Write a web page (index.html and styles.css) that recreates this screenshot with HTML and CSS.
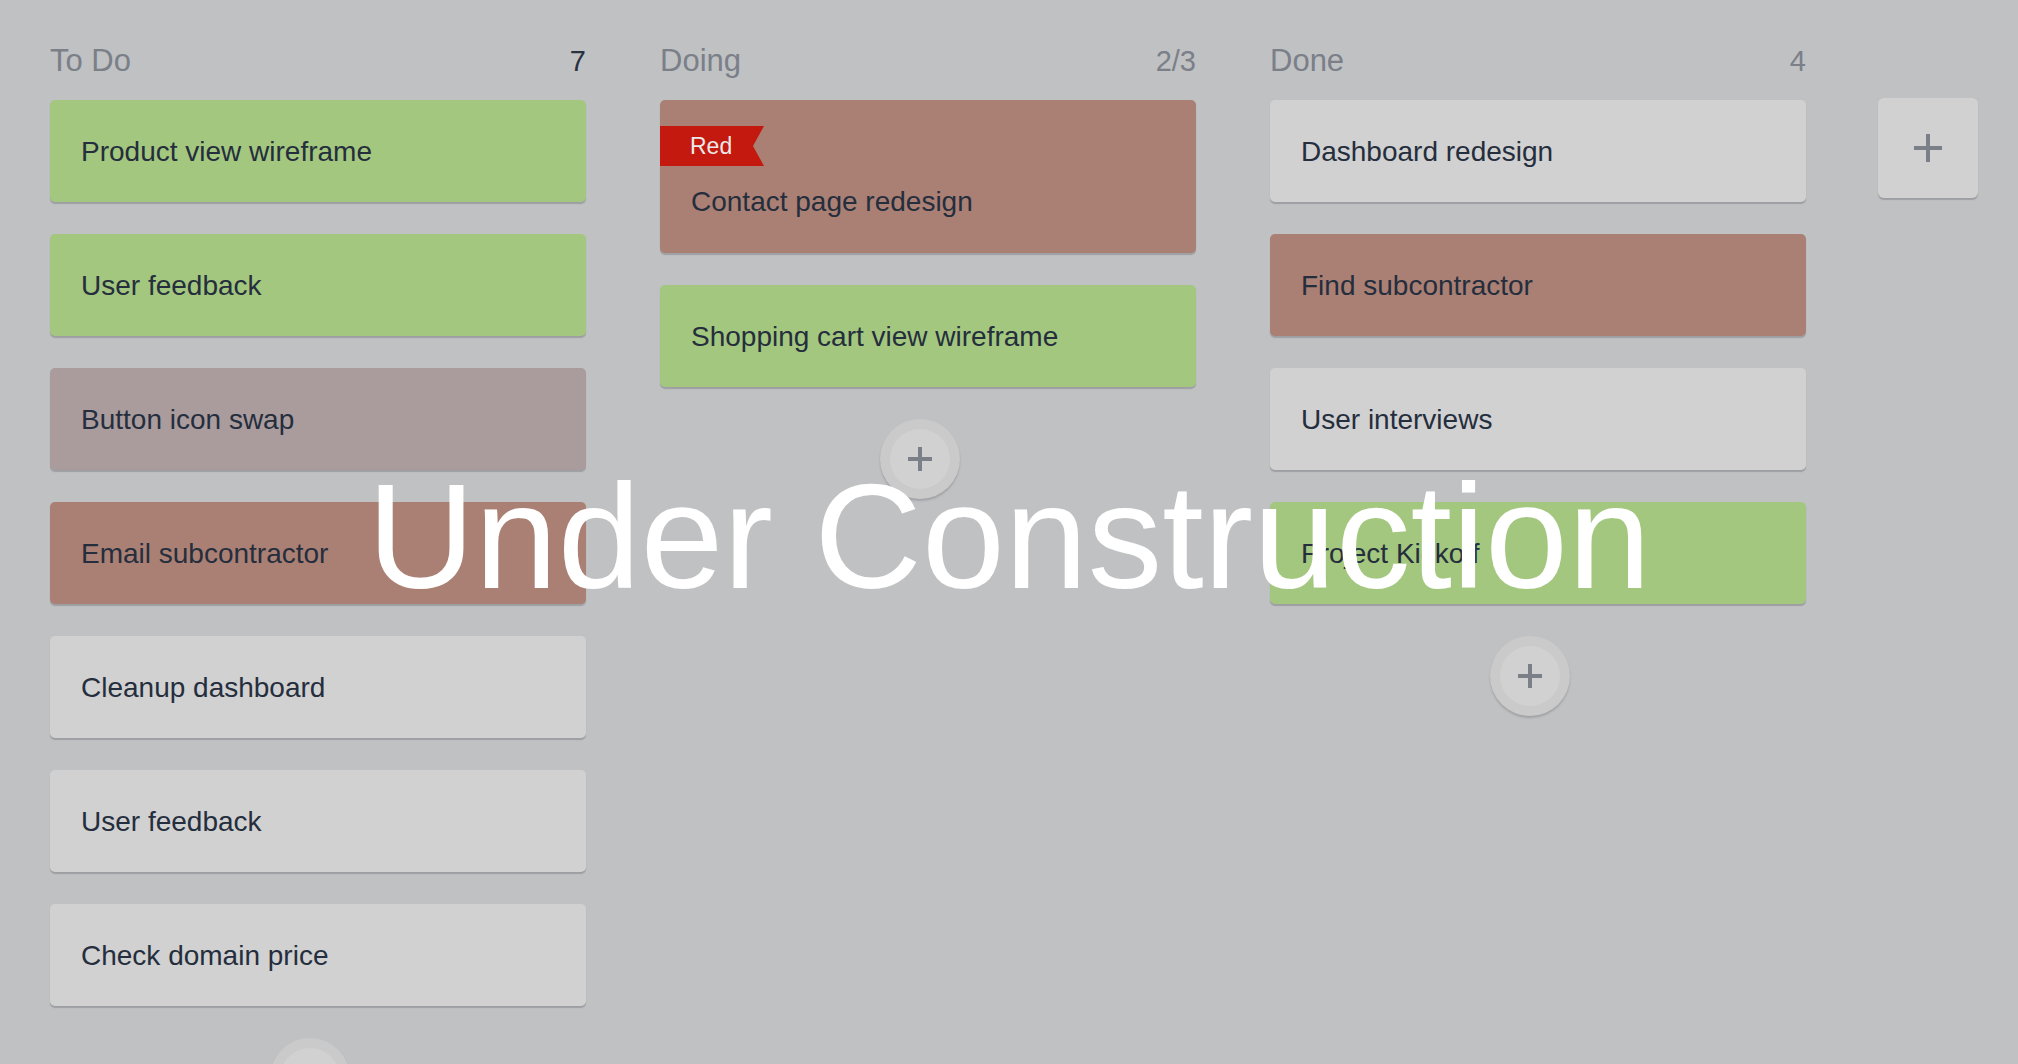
FILE: index.html
```html
<!DOCTYPE html>
<html lang="en">
<head>
<meta charset="utf-8">
<title>Board</title>
<link rel="stylesheet" href="styles.css">
</head>
<body>
<div class="board">
  <section class="column">
    <header class="col-head"><span class="col-title">To Do</span><span class="col-count over">7</span></header>
    <div class="cards">
      <div class="card green"><span class="card-text">Product view wireframe</span></div>
      <div class="card green"><span class="card-text">User feedback</span></div>
      <div class="card mauve"><span class="card-text">Button icon swap</span></div>
      <div class="card rust"><span class="card-text">Email subcontractor</span></div>
      <div class="card grey"><span class="card-text">Cleanup dashboard</span></div>
      <div class="card grey"><span class="card-text">User feedback</span></div>
      <div class="card grey"><span class="card-text">Check domain price</span></div>
    </div>
    <button class="add-card" type="button"><span class="add-inner"><span class="plus"></span></span></button>
  </section>
  <section class="column">
    <header class="col-head"><span class="col-title">Doing</span><span class="col-count">2/3</span></header>
    <div class="cards">
      <div class="card rust labeled"><span class="ribbon">Red</span><span class="card-text">Contact page redesign</span></div>
      <div class="card green"><span class="card-text">Shopping cart view wireframe</span></div>
    </div>
    <button class="add-card" type="button"><span class="add-inner"><span class="plus"></span></span></button>
  </section>
  <section class="column">
    <header class="col-head"><span class="col-title">Done</span><span class="col-count">4</span></header>
    <div class="cards">
      <div class="card grey"><span class="card-text">Dashboard redesign</span></div>
      <div class="card rust"><span class="card-text">Find subcontractor</span></div>
      <div class="card grey"><span class="card-text">User interviews</span></div>
      <div class="card green"><span class="card-text">Project Kickoff</span></div>
    </div>
    <button class="add-card" type="button"><span class="add-inner"><span class="plus"></span></span></button>
  </section>
  <button class="add-column" type="button"><span class="plus big"></span></button>
</div>
<div class="overlay">Under Construction</div>
</body>
</html>
```

FILE: styles.css
```css
html, body {
  margin: 0;
  padding: 0;
  height: 100%;
  overflow: hidden;
}

body {
  background: #c0c1c3;
  font-family: "Liberation Sans", Arial, Helvetica, sans-serif;
  color: #252e3d;
  position: relative;
}

.board {
  display: flex;
  align-items: flex-start;
  gap: 74px;
  padding: 44px 0 0 50px;
}

.column {
  width: 536px;
  display: flex;
  flex-direction: column;
}

.col-head {
  display: flex;
  justify-content: space-between;
  align-items: baseline;
  height: 36px;
  line-height: 34px;
  margin-bottom: 20px;
}

.col-title {
  font-size: 31px;
  color: #7a7f88;
}

.col-count {
  font-size: 29px;
  color: #7a7f88;
}

.col-count.over {
  color: #2a3140;
}

.cards {
  display: flex;
  flex-direction: column;
  gap: 32px;
}

.card {
  height: 102px;
  box-sizing: border-box;
  padding: 2px 31px 0;
  display: flex;
  align-items: center;
  border-radius: 5px;
  box-shadow: 0 2px 1px rgba(70, 72, 80, 0.28);
  font-size: 28px;
  line-height: 32px;
}

.card.labeled {
  height: auto;
  flex-direction: column;
  align-items: flex-start;
  padding: 26px 31px 35px;
}

.green { background: #a3c77e; }
.rust  { background: #ab8074; }
.mauve { background: #aa9b9d; }
.grey  { background: #d1d1d1; }

.ribbon {
  display: block;
  margin-left: -31px;
  width: 104px;
  height: 40px;
  box-sizing: border-box;
  padding-left: 30px;
  line-height: 40px;
  font-size: 23px;
  color: #ebe9e9;
  background: #c4190e;
  clip-path: polygon(0 0, 100% 0, calc(100% - 11px) 50%, 100% 100%, 0 100%);
  margin-bottom: 20px;
}

.add-card {
  align-self: flex-start;
  margin: 32px 0 0 220px;
  width: 80px;
  height: 80px;
  padding: 10px;
  border: 0;
  border-radius: 50%;
  background: #cacacb;
  box-shadow: 0 2px 2px rgba(70, 72, 80, 0.25);
  display: flex;
  box-sizing: border-box;
}

.add-inner {
  flex: 1;
  border-radius: 50%;
  background: #d1d1d1;
  display: flex;
  align-items: center;
  justify-content: center;
}

.plus {
  position: relative;
  width: 24px;
  height: 24px;
  display: block;
}

.plus::before,
.plus::after {
  content: "";
  position: absolute;
  background: #7b8088;
}

.plus::before {
  left: 0;
  right: 0;
  top: 50%;
  height: 4px;
  margin-top: -2px;
}

.plus::after {
  top: 0;
  bottom: 0;
  left: 50%;
  width: 4px;
  margin-left: -2px;
}

.plus.big {
  width: 28px;
  height: 28px;
}

.add-column {
  width: 100px;
  height: 100px;
  margin: 54px 0 0 -2px;
  flex: none;
  border: 0;
  padding: 0;
  border-radius: 6px;
  background: #d1d1d1;
  box-shadow: 0 2px 1px rgba(70, 72, 80, 0.28);
  display: flex;
  align-items: center;
  justify-content: center;
}

.overlay {
  position: absolute;
  left: 0;
  right: 0;
  top: 462px;
  text-align: center;
  font-size: 149px;
  line-height: 149px;
  color: #ffffff;
  white-space: nowrap;
  pointer-events: none;
}
```
